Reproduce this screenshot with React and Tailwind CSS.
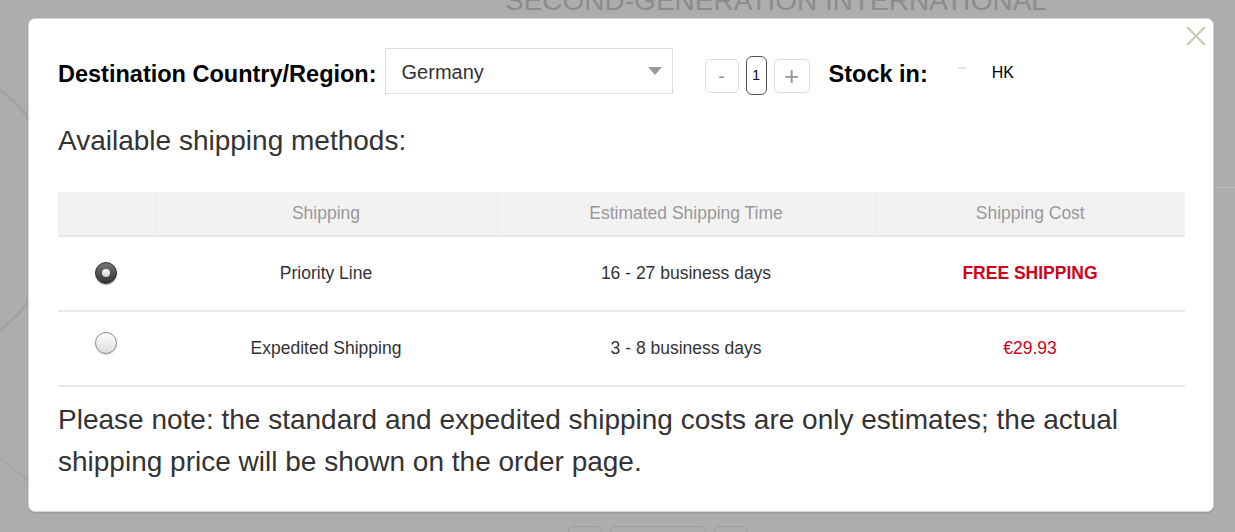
import React from 'react';

const rows = [
  { name: 'Priority Line', time: '16 - 27 business days', cost: 'FREE SHIPPING', free: true, checked: true },
  { name: 'Expedited Shipping', time: '3 - 8 business days', cost: '€29.93', free: false, checked: false },
];

const Radio = ({ checked }) =>
  checked ? (
    <span className="inline-flex h-[22px] w-[22px] items-center justify-center rounded-full border border-[#333] bg-gradient-to-b from-[#777] to-[#333] shadow-[0_1px_1px_rgba(0,0,0,0.3)]">
      <span className="h-[8px] w-[8px] rounded-full bg-gradient-to-b from-white to-[#ccc]" />
    </span>
  ) : (
    <span className="inline-block h-[22px] w-[22px] rounded-full border border-[#8a8a8a] bg-gradient-to-b from-white to-[#dcdcdc] shadow-[0_1px_1px_rgba(0,0,0,0.15)]" />
  );

const App = () => {
  return (
    <div className="relative h-[532px] w-[1235px] overflow-hidden bg-[#adadad] font-['Liberation_Sans',Arial,sans-serif]">
      {/* page behind the overlay */}
      <div className="absolute left-[505px] top-[-13px] text-[28px] leading-none text-[#8c8c8c]">
        SECOND-GENERATION INTERNATIONAL
      </div>
      <div className="absolute left-[1214px] top-[187px] h-px w-[30px] bg-[#bdbdbd]" />
      <svg className="absolute left-[-260px] top-[70px]" width="330" height="420" viewBox="0 0 330 420">
        <circle cx="170" cy="140" r="150" fill="none" stroke="#a3a3a3" strokeWidth="3" />
        <path d="M20 190 Q 150 300 300 420" fill="none" stroke="#a6a6a6" strokeWidth="2" />
      </svg>
      <div className="absolute left-[515px] top-[524px] flex items-center gap-2">
        <span className="text-[22px] text-[#8c8c8c]">QTY</span>
        <span className="h-[30px] w-[34px] rounded-md border border-[#9c9c9c]" />
        <span className="h-[30px] w-[96px] rounded-md border border-[#9c9c9c]" />
        <span className="h-[30px] w-[34px] rounded-md border border-[#9c9c9c]" />
      </div>

      {/* modal */}
      <div className="absolute left-[28px] top-[18px] h-[494px] w-[1186px] rounded-[7px] border border-[#d6d6d6] bg-white pl-[29px] pr-[28px] pt-[29px] shadow-[0_1px_2px_rgba(0,0,0,0.15)]">
        <button className="absolute right-[6px] top-[6px] text-[#c9c9b6]">
          <svg width="22" height="22" viewBox="0 0 22 22">
            <path d="M2 2 L20 20 M20 2 L2 20" stroke="currentColor" strokeWidth="2.2" />
          </svg>
        </button>

        <div className="flex h-[46px] items-center">
          <span className="pt-[7px] text-[23.5px] font-bold text-black">Destination Country/Region:</span>
          <div className="ml-[8px] flex h-[46px] w-[288px] items-center justify-between border border-[#dedede] pl-[16px] pr-[10px]">
            <span className="pt-[2px] text-[20px] text-[#333]">Germany</span>
            <svg width="14" height="8" viewBox="0 0 14 8">
              <path d="M0 0 H14 L7 8 Z" fill="#9a9a9a" />
            </svg>
          </div>
          <div className="ml-[32px] mt-[9px] flex items-center gap-[7px]">
            <span className="flex h-[34px] w-[34px] items-center justify-center rounded-[5px] border border-[#dcdcdc] text-[20px] text-[#999]">-</span>
            <span className="flex h-[39px] w-[21px] items-center justify-center rounded-[6px] border border-[#555] text-[14px] text-black">1</span>
            <span className="flex h-[34px] w-[36px] items-center justify-center rounded-[5px] border border-[#dcdcdc] text-[26px] leading-none text-[#999]">+</span>
          </div>
          <span className="ml-[19px] pt-[7px] text-[23.5px] font-bold text-black">Stock in:</span>
          <span className="ml-[30px] mt-[-6px] h-[2px] w-[8px] bg-[#e6e6e6]" />
          <span className="ml-[26px] pt-[4px] text-[16px] text-black">HK</span>
        </div>

        <div className="mt-[32px] text-[28px] leading-[30px] text-[#333]">Available shipping methods:</div>

        <table className="mt-[36px] w-[1127px] border-collapse text-[17.5px]">
          <thead>
            <tr className="h-[44px] border-b-2 border-[#e8e8e8] bg-[#f2f2f2] text-[#999]">
              <th className="w-[97px] border-r border-[#e9e9e9] font-normal" />
              <th className="w-[342px] border-r border-[#e9e9e9] font-normal">Shipping</th>
              <th className="w-[378px] border-r border-[#e9e9e9] font-normal">Estimated Shipping Time</th>
              <th className="font-normal">Shipping Cost</th>
            </tr>
          </thead>
          <tbody>
            {rows.map((r) => (
              <tr key={r.name} className="h-[75px] border-b-2 border-[#e8e8e8] text-center text-[#333]">
                <td className="pb-[4px] pr-[2px]">
                  <Radio checked={r.checked} />
                </td>
                <td>{r.name}</td>
                <td>{r.time}</td>
                <td className={r.free ? 'font-bold text-[#d0021b]' : 'text-[#d0021b]'}>{r.cost}</td>
              </tr>
            ))}
          </tbody>
        </table>

        <p className="mt-[12px] text-[28px] leading-[42px] text-[#333]">
          Please note: the standard and expedited shipping costs are only estimates; the actual shipping price will be shown on the order page.
        </p>
      </div>
    </div>
  );
};

export default App;
